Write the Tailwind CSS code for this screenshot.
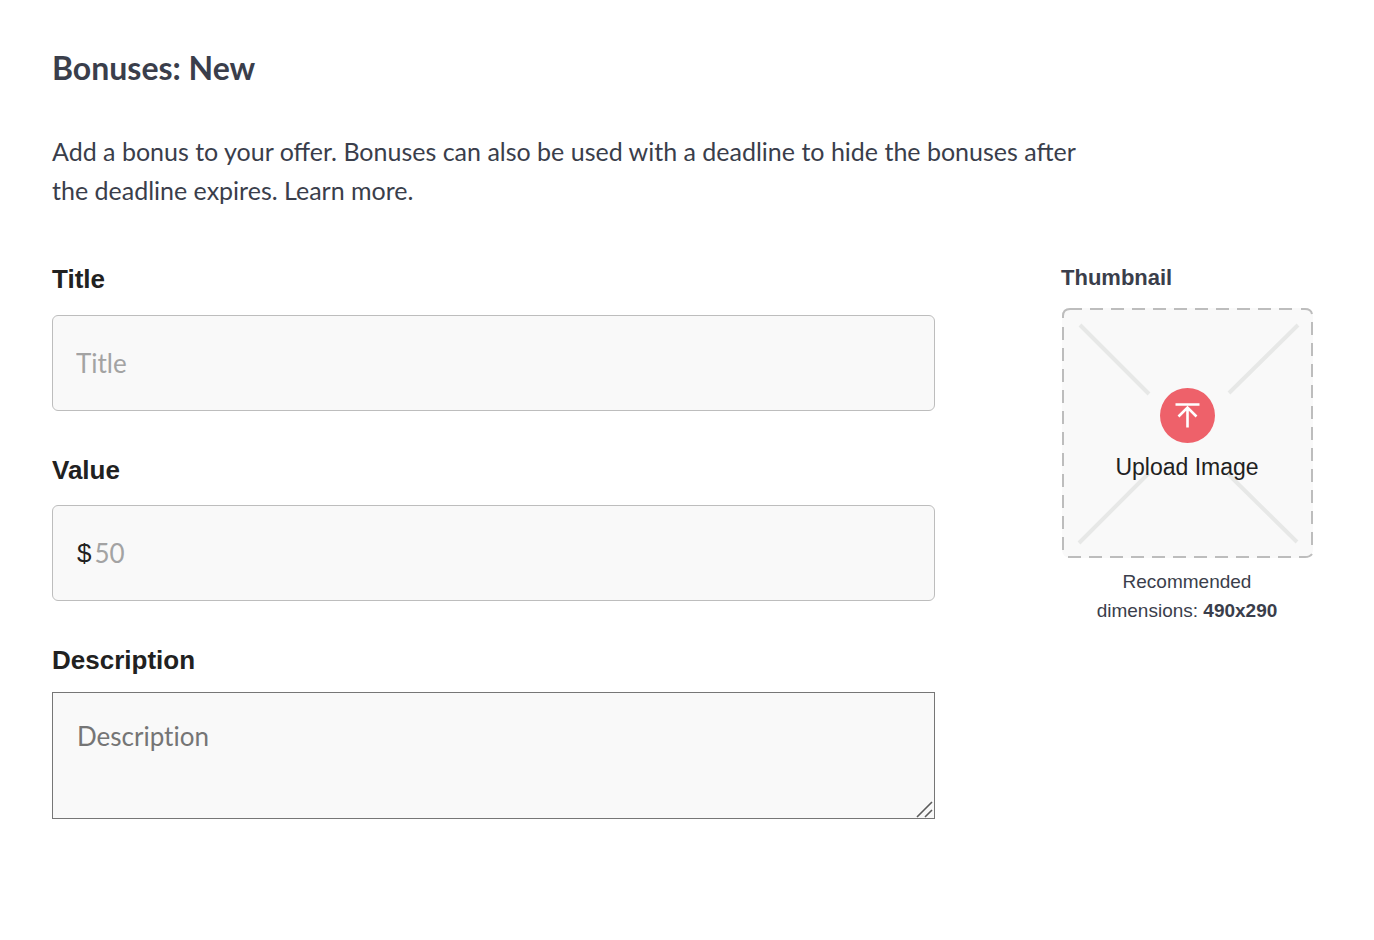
<!DOCTYPE html>
<html lang="en">
<head>
    <meta charset="UTF-8">
    <meta name="viewport" content="width=device-width, initial-scale=1.0">
    <title>Bonuses: New</title>
    <script src="https://cdn.jsdelivr.net/npm/@tailwindcss/browser@4"></script>
</head>
<body class="bg-white font-['Lato',sans-serif] text-[#3a3e4b]">
    <main class="px-[52px] pt-11">
        <h1 class="text-[32px] leading-12 font-bold">Bonuses: New</h1>
        <p class="mt-10 max-w-[1060px] text-[25px] leading-[39px]">Add a bonus to your offer. Bonuses can also be used with a deadline to hide the bonuses after the deadline expires. Learn more.</p>

        <form class="mt-[49px] flex items-start gap-[126px]">
            <div class="min-w-0 flex-1">
                <label for="title" class="block font-['Liberation_Sans',Arial,sans-serif] text-[26px] leading-[40px] font-bold text-[#212121]">Title</label>
                <input id="title" type="text" placeholder="Title" class="mt-4 block h-24 w-full rounded-md border border-[#bdbdbd] bg-[#f9f9f9] px-[23px] text-[26px] placeholder:text-[#a3a3a3]">

                <label for="value" class="mt-[39px] block font-['Liberation_Sans',Arial,sans-serif] text-[26px] leading-[40px] font-bold text-[#212121]">Value</label>
                <div class="mt-[15px] flex h-24 items-center gap-[3px] rounded-md border border-[#bdbdbd] bg-[#f9f9f9] px-6 text-[26px]">
                    <span class="font-['Liberation_Sans',Arial,sans-serif] text-[#212121]">$</span>
                    <input id="value" type="text" placeholder="50" class="min-w-0 grow placeholder:text-[#a3a3a3]">
                </div>

                <label for="description" class="mt-[39px] block font-['Liberation_Sans',Arial,sans-serif] text-[26px] leading-[40px] font-bold text-[#212121]">Description</label>
                <div class="relative mt-3">
                    <textarea id="description" placeholder="Description" class="block h-[127px] w-full resize-y border border-[#767676] bg-[#f9f9f9] p-6 text-[26px] leading-[39px] [font-variant-ligatures:none] placeholder:text-[#757575]"></textarea>
                    <!-- resize grip -->
                    <svg class="pointer-events-none absolute right-px bottom-px h-[18px] w-[18px]" viewBox="0 0 18 18" fill="none">
                        <rect width="18" height="18" fill="#f9f9f9"/>
                        <path d="M1 17 16 2M9 17 16 10" stroke="#5c5c5c" stroke-width="1.6"/>
                    </svg>
                </div>
            </div>

            <div class="mr-[9px] w-[252px] font-['Liberation_Sans',Arial,sans-serif]">
                <h2 class="text-[22px] leading-[38px] font-bold">Thumbnail</h2>
                <button type="button" class="relative mt-[11px] block h-[250px] w-full pt-[2px] text-[#212121]">
                    <svg class="absolute inset-0 h-full w-full" viewBox="0 0 252 250" fill="none">
                        <rect x="1" width="251" height="250" rx="8" fill="#f9f9f9"/>
                        <!-- dashed frame -->
                        <g stroke="#bdbdbd" stroke-width="2">
                            <path d="M2 10V8Q2 1 9 1H21M240 1H244Q250 1 251 6M238 249H244Q249 249 251 246"/>
                            <path d="M29 1H232M251 14V238M7 249H230M2 19V243" stroke-dasharray="13 8"/>
                        </g>
                        <path d="M19 17 88 86M237 17 168 85M18 235 88 165M236 234 166 165" stroke="#e7e8e7" stroke-width="4"/>
                    </svg>
                    <span class="relative flex flex-col items-center gap-[10px]">
                        <svg class="h-[55px] w-[55px]" viewBox="0 0 55 55" fill="none">
                            <circle cx="27.5" cy="27.5" r="27.5" fill="#ee616a"/>
                            <path d="M15.5 16.5H39.5M27.5 39.5V19.5M18.5 28.5 27.5 19.5 36.5 28.5" stroke="#fff" stroke-width="2.6"/>
                        </svg>
                        <span class="text-[23px] leading-7">Upload Image</span>
                    </span>
                </button>
                <p class="mt-[9px] text-center text-[19px] leading-[29px]">Recommended<br>dimensions: <b>490x290</b></p>
            </div>
        </form>
    </main>
</body>
</html>
